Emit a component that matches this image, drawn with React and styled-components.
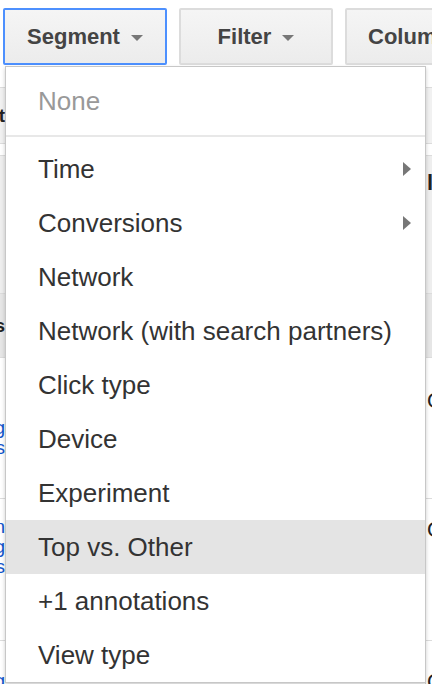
import React from "react";
import styled, { createGlobalStyle } from "styled-components";

const GlobalStyle = createGlobalStyle`
  html, body {
    margin: 0;
    padding: 0;
    background: #fff;
  }
  body {
    font-family: "Liberation Sans", Arial, sans-serif;
  }
`;

const Page = styled.div`
  position: relative;
  width: 432px;
  height: 684px;
  overflow: hidden;
  background: #fff;
`;

const Toolbar = styled.div`
  display: flex;
  gap: 12px;
  padding: 8px 0 0 3px;
  height: 57px;
`;

const Button = styled.div`
  flex: none;
  box-sizing: border-box;
  width: ${(p) => p.$width}px;
  height: 57px;
  display: flex;
  align-items: center;
  justify-content: ${(p) => (p.$clipped ? "flex-start" : "center")};
  padding-left: ${(p) => (p.$clipped ? "21px" : "0")};
  gap: 11px;
  border: 2px solid ${(p) => (p.$active ? "#4d90fe" : "#dcdcdc")};
  border-radius: 2px;
  background: linear-gradient(#f5f5f5, #ececec);
  color: #444;
  font-size: 22px;
  font-weight: bold;
  white-space: nowrap;
`;

const Caret = styled.span`
  width: 0;
  height: 0;
  border-left: 6px solid transparent;
  border-right: 6px solid transparent;
  border-top: 6px solid #777;
  margin-top: 2px;
`;

const Table = styled.div`
  margin-top: 22px;
  display: flex;
  flex-direction: column;
`;

const Row = styled.div`
  display: flex;
  height: ${(p) => p.$h}px;
  background: ${(p) => p.$bg || "#fff"};
  border-top: 1px solid #dcdcdc;
  box-sizing: border-box;
`;

const EdgeCell = styled.div`
  width: 5px;
  flex: none;
  overflow: hidden;
  display: flex;
  flex-direction: column;
  align-items: flex-end;
  padding-top: ${(p) => p.$top || 0}px;
  font-size: 19px;
  line-height: 20px;
  font-weight: ${(p) => (p.$bold ? "bold" : "normal")};
  color: ${(p) => (p.$link ? "#1155cc" : "#222")};
  white-space: nowrap;
`;

const MidCell = styled.div`
  flex: 1;
`;

const RightCell = styled.div`
  width: 5px;
  flex: none;
  overflow: hidden;
  border-left: 1px solid #d4d4d4;
  padding: ${(p) => p.$top || 0}px 0 0 1px;
  font-size: 22px;
  line-height: 22px;
  color: #222;
  font-weight: ${(p) => (p.$bold ? "bold" : "normal")};
  white-space: nowrap;
`;

const Menu = styled.div`
  position: absolute;
  top: 66px;
  left: 5px;
  width: 421px;
  box-sizing: border-box;
  padding-top: 7px;
  background: #fff;
  border: 1px solid rgba(0, 0, 0, 0.22);
  box-shadow: 0 2px 4px rgba(0, 0, 0, 0.2);
`;

const Item = styled.div`
  display: flex;
  align-items: center;
  justify-content: space-between;
  height: 54px;
  padding: 0 14px 0 32px;
  font-size: 26px;
  color: ${(p) => (p.$muted ? "#999" : "#333")};
  background: ${(p) => (p.$hover ? "#e4e4e4" : "transparent")};
  white-space: nowrap;
`;

const Divider = styled.div`
  height: 2px;
  margin: 7px 0 5px;
  background: #e8e8e8;
`;

const SubArrow = styled.span`
  width: 0;
  height: 0;
  border-top: 7px solid transparent;
  border-bottom: 7px solid transparent;
  border-left: 8px solid #777;
`;

const items = [
  { label: "Time", sub: true },
  { label: "Conversions", sub: true },
  { label: "Network" },
  { label: "Network (with search partners)" },
  { label: "Click type" },
  { label: "Device" },
  { label: "Experiment" },
  { label: "Top vs. Other", hover: true },
  { label: "+1 annotations" },
  { label: "View type" },
];

export default function App() {
  return (
    <Page>
      <GlobalStyle />
      <Toolbar>
        <Button $width={164} $active>
          Segment <Caret />
        </Button>
        <Button $width={154}>
          Filter <Caret />
        </Button>
        <Button $width={140} $clipped>
          Columns <Caret />
        </Button>
      </Toolbar>

      <Table>
        <Row $h={56} $bg="#f1f1f1">
          <EdgeCell $top={18} $bold>Text</EdgeCell>
          <MidCell />
          <RightCell />
        </Row>
        <Row $h={12} />
        <Row $h={138} $bg="#eeeeee">
          <EdgeCell />
          <MidCell />
          <RightCell $top={16} $bold>ls</RightCell>
        </Row>
        <Row $h={64} $bg="#e6e6e6">
          <EdgeCell $top={22} $bold>Ads</EdgeCell>
          <MidCell />
          <RightCell />
        </Row>
        <Row $h={141}>
          <EdgeCell $top={60} $link>
            <span>Spring</span>
            <span>Ads</span>
          </EdgeCell>
          <MidCell />
          <RightCell $top={32}>Other</RightCell>
        </Row>
        <Row $h={142}>
          <EdgeCell $top={18} $link>
            <span>Campaign</span>
            <span>Spring</span>
            <span>Ads</span>
          </EdgeCell>
          <MidCell />
          <RightCell $top={20}>Other</RightCell>
        </Row>
        <Row $h={60}>
          <EdgeCell $top={30} $link>Spring</EdgeCell>
          <MidCell />
          <RightCell $top={30}>Other</RightCell>
        </Row>
      </Table>

      <Menu>
        <Item $muted>None</Item>
        <Divider />
        {items.map((it) => (
          <Item key={it.label} $hover={it.hover}>
            {it.label}
            {it.sub && <SubArrow />}
          </Item>
        ))}
      </Menu>
    </Page>
  );
}
